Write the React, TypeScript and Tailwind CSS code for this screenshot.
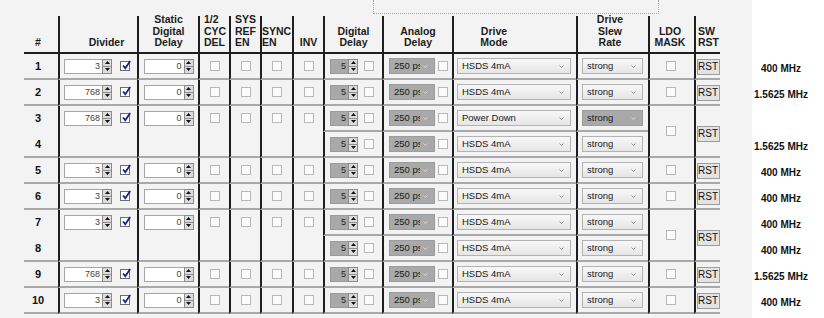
import React from 'react';

type Row = {
  n: number;
  div?: number;
  mode: string;
  slewDark?: boolean;
  span?: boolean;
  sub?: boolean;
  freq?: string;
};

const rows: Row[] = [
  { n: 1, div: 3, mode: 'HSDS 4mA', freq: '400 MHz' },
  { n: 2, div: 768, mode: 'HSDS 4mA', freq: '1.5625 MHz' },
  { n: 3, div: 768, mode: 'Power Down', slewDark: true, span: true },
  { n: 4, mode: 'HSDS 4mA', sub: true, freq: '1.5625 MHz' },
  { n: 5, div: 3, mode: 'HSDS 4mA', freq: '400 MHz' },
  { n: 6, div: 3, mode: 'HSDS 4mA', freq: '400 MHz' },
  { n: 7, div: 3, mode: 'HSDS 4mA', span: true, freq: '400 MHz' },
  { n: 8, mode: 'HSDS 4mA', sub: true, freq: '400 MHz' },
  { n: 9, div: 768, mode: 'HSDS 4mA', freq: '1.5625 MHz' },
  { n: 10, div: 3, mode: 'HSDS 4mA', freq: '400 MHz' },
];

const Spin = () => (
  <div className="flex h-[15px] w-[10px] flex-col border border-[#8c8c8c] bg-[#dcdcdc]">
    <div className="flex flex-1 items-center justify-center border-b border-[#8c8c8c]">
      <svg width="5" height="3" viewBox="0 0 5 3">
        <path d="M2.5 0L5 3H0z" fill="#111" />
      </svg>
    </div>
    <div className="flex flex-1 items-center justify-center">
      <svg width="5" height="3" viewBox="0 0 5 3">
        <path d="M0 0h5L2.5 3z" fill="#111" />
      </svg>
    </div>
  </div>
);

const NumBox = ({ value, w, dark }: { value: number; w: string; dark?: boolean }) => (
  <div className="flex items-center">
    <div
      className={`h-[15px] ${w} border-y border-l pr-[2px] text-right text-[9px] leading-[13px] ${
        dark ? 'border-[#9a9a9a] bg-[#a9a9a9] text-[#222]' : 'border-[#a6a6a6] bg-white text-[#444]'
      }`}
    >
      {value}
    </div>
    <Spin />
  </div>
);

const Box = ({ checked }: { checked?: boolean }) => (
  <div
    className={`relative h-[10px] w-[10px] border ${
      checked ? 'border-[#6e6e6e] bg-white' : 'border-[#b8b8b8] bg-[#fbfbfb]'
    }`}
  >
    {checked && (
      <svg className="absolute left-[1px] top-[-2px]" width="9" height="10" viewBox="0 0 9 10">
        <path d="M1 5.5L3.3 8.2L8.2 1" stroke="#1a1f8c" strokeWidth="1.8" fill="none" />
      </svg>
    )}
  </div>
);

const Chevron = ({ light }: { light?: boolean }) => (
  <svg width="5" height="3" viewBox="0 0 5 3" className="shrink-0">
    <path d="M0.5 0.5L2.5 2.5L4.5 0.5" stroke={light ? '#dedede' : '#8a8a8a'} strokeWidth="0.9" fill="none" />
  </svg>
);

const Select = ({ label, w, dark, clip }: { label: string; w: string; dark?: boolean; clip?: string }) => (
  <div
    className={`flex h-[16px] ${w} items-center justify-between border pl-[4px] pr-[6px] text-[9.5px] text-[#1a1a1a] ${
      dark ? 'border-[#9c9c9c] bg-[#a9a9a9]' : 'border-[#b3b3b3] bg-gradient-to-b from-[#f8f8f8] to-[#e5e5e5]'
    }`}
  >
    <span className={`overflow-hidden whitespace-nowrap ${clip ?? ''}`}>{label}</span>
    <Chevron light={dark} />
  </div>
);

const Rst = () => (
  <div className="h-[16px] w-[23px] border border-[#9d9d9d] bg-[#e3e3e3] text-center text-[10px] leading-[14px] text-[#111]">
    RST
  </div>
);

const headers: { lines: string[]; cls: string }[] = [
  { lines: ['#'], cls: 'justify-center pr-[6px]' },
  { lines: ['Divider'], cls: 'justify-center pl-[16px]' },
  { lines: ['Static', 'Digital', 'Delay'], cls: 'justify-center text-center' },
  { lines: ['1/2', 'CYC', 'DEL'], cls: 'justify-start pl-[4px]' },
  { lines: ['SYS', 'REF', 'EN'], cls: 'justify-start pl-[4px]' },
  { lines: ['SYNC', 'EN'], cls: 'justify-start pl-[0px]' },
  { lines: ['INV'], cls: 'justify-center' },
  { lines: ['Digital', 'Delay'], cls: 'justify-center text-center' },
  { lines: ['Analog', 'Delay'], cls: 'justify-center text-center' },
  { lines: ['Drive', 'Mode'], cls: 'justify-center text-center pr-[42px]' },
  { lines: ['Drive', 'Slew', 'Rate'], cls: 'justify-center text-center pr-[6px]' },
  { lines: ['LDO', 'MASK'], cls: 'justify-center text-center pr-[4px]' },
  { lines: ['SW', 'RST'], cls: 'justify-start pl-[2px]' },
];

const line = 'border-l-2 border-l-[#1e1e1e]';
const rowLine = 'border-b-2 border-b-[#a9a9a9]';

export default function App() {
  const cells: React.ReactNode[] = [];

  headers.forEach((h, i) => {
    cells.push(
      <div
        key={`h${i}`}
        className={`flex items-end border-b-2 border-b-[#1e1e1e] pb-[3px] text-[10.5px] font-bold leading-[11.7px] text-[#1c1c1c] ${
          i > 0 ? line : ''
        } ${h.cls}`}
      >
        <div>
          {h.lines.map((l) => (
            <div key={l}>{l}</div>
          ))}
        </div>
      </div>
    );
  });

  rows.forEach((r) => {
    const k = `r${r.n}`;
    const span = r.span ? 'row-span-2 items-start' : 'items-center';
    const top = (node: React.ReactNode, cls: string) =>
      r.span ? <div className={`flex h-[24px] w-full items-center ${cls}`}>{node}</div> : node;

    cells.push(
      <div
        key={`${k}n`}
        className={`flex items-center justify-center pr-[6px] text-[11px] font-bold text-[#111] ${
          r.span ? 'border-b-2 border-b-transparent' : rowLine
        }`}
      >
        {r.n}
      </div>
    );

    if (!r.sub) {
      cells.push(
        <div key={`${k}d`} className={`flex ${span} ${line} ${rowLine} pl-[4px]`}>
          {top(
            <>
              <NumBox value={r.div ?? 0} w="w-[38px]" />
              <div className="ml-[8px]">
                <Box checked />
              </div>
            </>,
            'justify-start'
          )}
        </div>
      );
      cells.push(
        <div key={`${k}s`} className={`flex justify-center ${span} ${line} ${rowLine}`}>
          {top(<NumBox value={0} w="w-[40px]" />, 'justify-center')}
        </div>
      );
      ['c', 'y', 'e', 'i'].forEach((c) => {
        cells.push(
          <div key={`${k}${c}`} className={`flex justify-center ${span} ${line} ${rowLine}`}>
            {top(<Box />, 'justify-center')}
          </div>
        );
      });
    }

    cells.push(
      <div key={`${k}dd`} className={`flex items-center pl-[5px] ${line} ${rowLine}`}>
        <NumBox value={5} w="w-[18px]" dark />
        <div className="ml-[6px]">
          <Box />
        </div>
      </div>
    );
    cells.push(
      <div key={`${k}ad`} className={`flex items-center pl-[5px] ${line} ${rowLine}`}>
        <Select label="250 ps" w="w-[46px]" dark clip="w-[26px]" />
        <div className="ml-[3px]">
          <Box />
        </div>
      </div>
    );
    cells.push(
      <div key={`${k}dm`} className={`flex items-center pl-[3px] ${line} ${rowLine}`}>
        <Select label={r.mode} w="w-[114px]" />
      </div>
    );
    cells.push(
      <div key={`${k}sr`} className={`flex items-center pl-[4px] ${line} ${rowLine}`}>
        <Select label="strong" w="w-[61px]" dark={r.slewDark} />
      </div>
    );

    if (!r.sub) {
      cells.push(
        <div key={`${k}ldo`} className={`flex items-center justify-center pr-[2px] ${r.span ? 'row-span-2' : ''} ${line} ${rowLine}`}>
          <Box />
        </div>
      );
      cells.push(
        <div key={`${k}rst`} className={`flex items-center justify-center pt-[2px] ${r.span ? 'row-span-2 pt-[5px]' : ''} ${line} ${rowLine}`}>
          <Rst />
        </div>
      );
    }
  });

  return (
    <div className="flex h-[318px] w-[824px] overflow-hidden bg-white font-['Liberation_Sans',Arial,sans-serif]">
      <div className="h-[318px] w-[752px] bg-[#f3f3f3]">
        <div className="ml-[373px] h-[14px] w-[286px] border-x border-b border-dotted border-[#a8a8a8]" />
        <div className="ml-[24px] mt-[2px] grid w-[696px] grid-cols-[34px_79px_61px_31px_31px_32px_31px_59px_70px_124px_72px_46px_26px] grid-rows-[38px_repeat(10,26px)]">
          {cells}
        </div>
      </div>
      <div className="flex w-[58px] flex-col pt-[54px]">
        {rows.map((r) => (
          <div
            key={r.n}
            className="flex h-[26px] items-center justify-center whitespace-nowrap pt-[3px] text-[10px] font-bold text-[#111]"
          >
            {r.freq ?? ''}
          </div>
        ))}
      </div>
    </div>
  );
}
